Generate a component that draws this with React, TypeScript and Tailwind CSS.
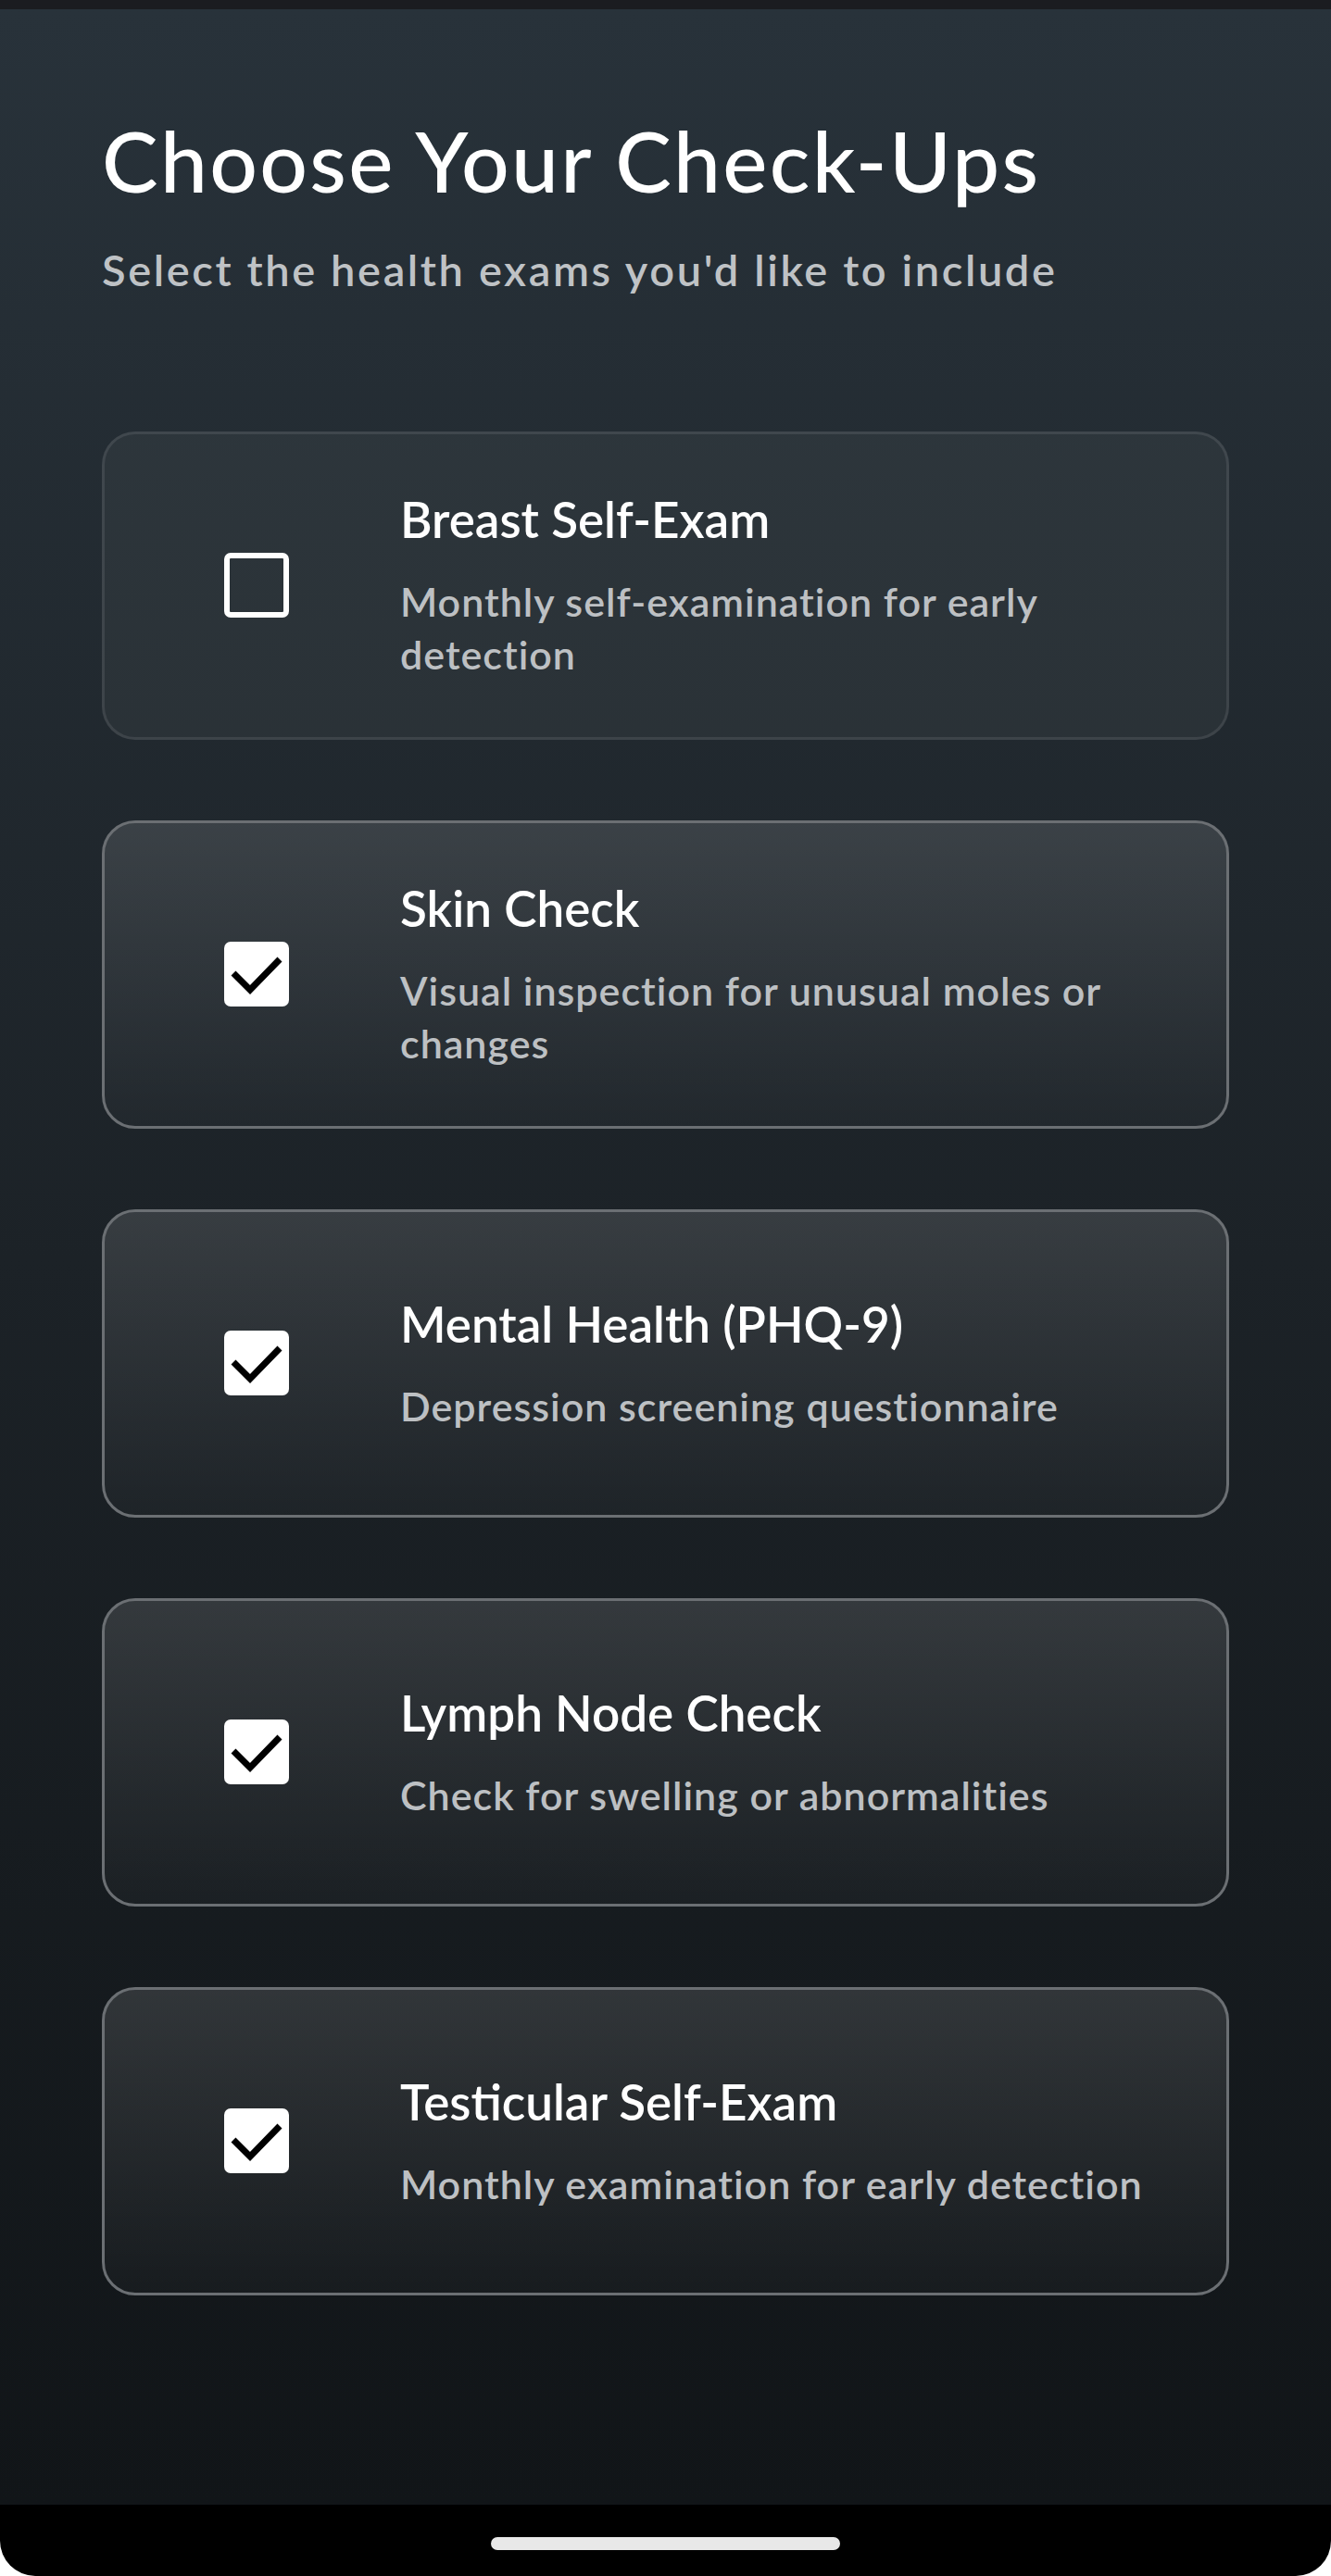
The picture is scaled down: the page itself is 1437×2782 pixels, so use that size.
import { useState } from "react";

const exams = [
  { title: "Breast Self-Exam", desc: "Monthly self-examination for early detection", checked: false },
  { title: "Skin Check", desc: "Visual inspection for unusual moles or changes", checked: true },
  { title: "Mental Health (PHQ-9)", desc: "Depression screening questionnaire", checked: true },
  { title: "Lymph Node Check", desc: "Check for swelling or abnormalities", checked: true },
  { title: "Testicular Self-Exam", desc: "Monthly examination for early detection", checked: true },
];

function Checkbox({ checked }: { checked: boolean }) {
  if (!checked) {
    return <div className="w-[70px] h-[70px] shrink-0 rounded-[7px] border-[6px] border-white" />;
  }
  return (
    <div className="w-[70px] h-[70px] shrink-0 rounded-[7px] bg-white">
      <svg width="70" height="70" viewBox="0 0 70 70">
        <polyline
          points="10,34 28,52 60,19"
          fill="none"
          stroke="#000"
          strokeWidth="7"
          strokeLinejoin="miter"
        />
      </svg>
    </div>
  );
}

export default function App() {
  const [items, setItems] = useState(exams);

  const toggle = (i: number) =>
    setItems(items.map((it, idx) => (idx === i ? { ...it, checked: !it.checked } : it)));

  return (
    <div className="w-full h-[2782px] bg-white flex flex-col font-['Lato',sans-serif]">
      <div className="h-[10px] bg-[#1b1c20]" />
      <main className="flex-1 bg-gradient-to-b from-[#28323a] via-[#1c2227] to-[#111518] px-[110px] pt-[108px]">
        <h1 className="text-white text-[91px] leading-[1.2] font-medium tracking-[2.3px]">
          Choose Your Check-Ups
        </h1>
        <p className="mt-[36px] text-[#bfc2c5] text-[47px] leading-[1.2] font-semibold tracking-[2.6px]">
          Select the health exams you'd like to include
        </p>

        <div className="mt-[146px] flex flex-col gap-[87px]">
          {items.map((item, i) => (
            <button
              key={item.title}
              onClick={() => toggle(i)}
              className={`h-[333px] w-full flex items-center text-left pl-[129px] pr-[60px] gap-[120px] rounded-[36px] border-[3px] ${
                item.checked
                  ? "border-[#6b6f73] bg-gradient-to-b from-white/[0.12] to-white/[0.02]"
                  : "border-white/[0.09] bg-white/[0.045]"
              }`}
            >
              <Checkbox checked={item.checked} />
              <div className="flex-1">
                <div className="text-white text-[53px] leading-[64px] font-semibold">{item.title}</div>
                <div className="mt-[28px] text-[#bdc0c3] text-[43px] leading-[57px] font-semibold tracking-[1px]">
                  {item.desc}
                </div>
              </div>
            </button>
          ))}
        </div>
      </main>
      <div className="h-[77px] bg-black rounded-b-[38px] flex justify-center pt-[35px]">
        <div className="w-[377px] h-[14px] rounded-full bg-[#e8e8e8]" />
      </div>
    </div>
  );
}
